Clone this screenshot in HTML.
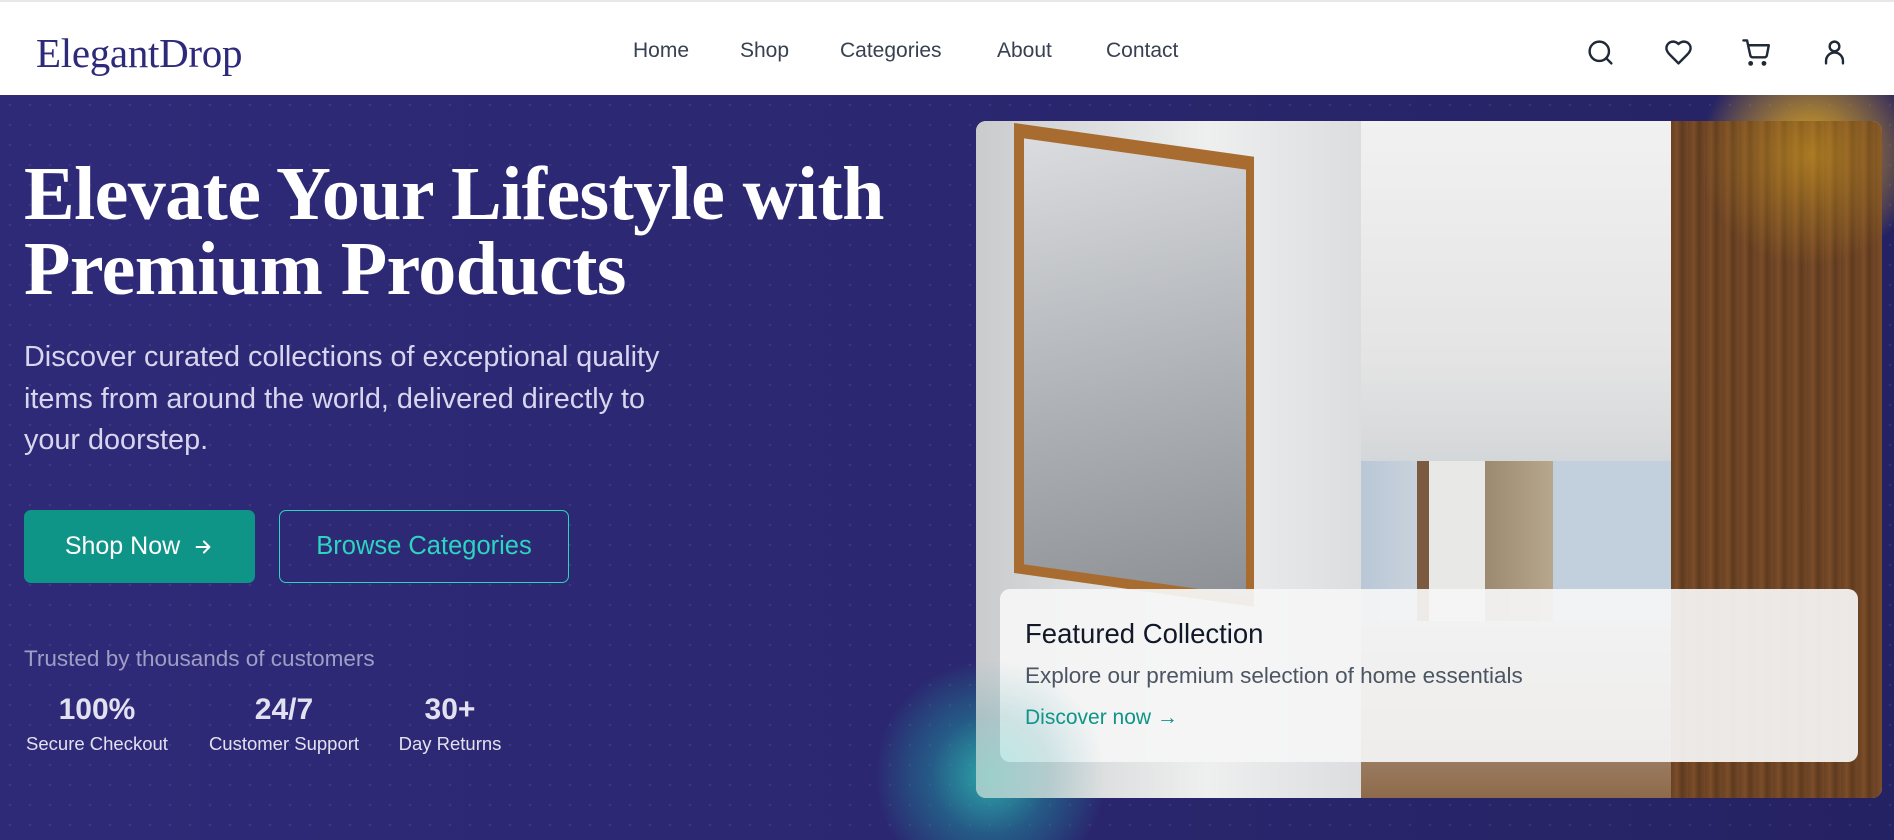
<!DOCTYPE html>
<html><head><meta charset="utf-8"><style>
*{margin:0;padding:0;box-sizing:border-box}
html,body{width:1894px;height:840px;overflow:hidden}
body{font-family:"Liberation Sans",sans-serif;background:#2a2668;position:relative}
.top{position:absolute;left:0;top:0;width:1894px;height:95px;background:#fff;border-top:2px solid #e5e7eb}
.logo{position:absolute;left:36px;top:27px;font-family:"Liberation Serif",serif;font-size:41px;color:#2e2a7a;letter-spacing:-0.3px}
.nav a{position:absolute;top:37px;font-size:21px;color:#374151;text-decoration:none}
.ic{position:absolute;top:36px}
.hero{position:absolute;left:0;top:95px;width:1894px;height:745px;background:linear-gradient(90deg,#2f2a78 0%,#2b2770 50%,#252263 100%);overflow:hidden}
.dots{position:absolute;inset:0;background-image:radial-gradient(rgba(255,255,255,.07) 1.2px,transparent 1.4px);background-size:20px 20px}
h1{position:absolute;left:24px;top:62px;font-family:"Liberation Serif",serif;font-weight:bold;font-size:76px;line-height:75px;color:#fff;letter-spacing:-0.6px;width:950px}
.p{position:absolute;left:24px;top:242px;font-size:28.8px;line-height:41.5px;color:#d8d6ee;width:800px;white-space:nowrap}
.b1{position:absolute;left:24px;top:415px;width:231px;height:73px;background:#0f9488;border-radius:7px;color:#fff;font-size:25px;display:flex;align-items:center;justify-content:center;gap:12px}
.b2{position:absolute;left:279px;top:415px;width:290px;height:73px;border:1.5px solid #2dd4bf;border-radius:7px;color:#2dd4bf;font-size:25.5px;display:flex;align-items:center;justify-content:center}
.tr{position:absolute;left:24px;top:551px;font-size:22.5px;color:#a09dc6}
.st{position:absolute;top:597px;text-align:center;color:#e2e1f0}
.st b{display:block;font-size:30px;line-height:36px}
.st span{display:block;font-size:18.5px;margin-top:5px}
.glow1{position:absolute;left:1700px;top:-60px;width:220px;height:240px;background:radial-gradient(circle,rgba(218,165,32,.9) 0%,rgba(218,165,32,.4) 35%,transparent 68%)}
.glow2{position:absolute;left:870px;top:560px;width:240px;height:240px;background:radial-gradient(circle,rgba(45,212,191,.6) 0%,rgba(30,150,160,.35) 35%,transparent 68%)}
.card{position:absolute;left:976px;top:26px;width:906px;height:677px;border-radius:10px;overflow:hidden;background:#ddd}
.card .wall{position:absolute;left:0;top:0;width:385px;height:677px;background:linear-gradient(90deg,#c9cbcd,#eeefef 60%,#dcdddf)}
.card .room{position:absolute;left:385px;top:0;width:310px;height:677px;background:linear-gradient(180deg,#f1f1f1 0%,#e4e4e4 35%,#cfd3d6 55%,#b8bcc0 75%,#a48a72 90%,#8e6a4b 100%)}
.card .win{position:absolute;left:385px;top:340px;width:310px;height:160px;background:linear-gradient(90deg,#b9c7d6 0,#c8d2dc 18%,#7b5a40 18%,#7b5a40 22%,#e8e8e6 22%,#e8e8e6 40%,#9c8a70 40%,#b7a78c 62%,#c2d0dd 62%)}
.card .wood{position:absolute;left:695px;top:0;width:211px;height:677px;background:repeating-linear-gradient(90deg,#6a4222 0,#7b4d2a 6px,#5e3a1e 11px,#734828 17px)}
.frame{position:absolute;left:38px;top:2px;width:240px;height:450px;background:#a86c30;transform:skewY(8deg);transform-origin:0 0}
.frame div{position:absolute;left:10px;top:14px;right:8px;bottom:10px;background:linear-gradient(160deg,#dadcdf,#aeb1b5 55%,#8d9095)}
.ov{position:absolute;left:24px;top:468px;width:858px;height:173px;border-radius:10px;background:rgba(245,245,245,.93)}
.ov h3{position:absolute;left:25px;top:29px;font-weight:normal;font-size:27.5px;color:#111827}
.ov p{position:absolute;left:25px;top:74px;font-size:22.5px;color:#4b5563}
.ov a{position:absolute;left:25px;top:117px;font-size:21px;color:#0f9488}
</style></head><body>
<div class="top">
<div class="logo">ElegantDrop</div>
<div class="nav"><a style="left:633px">Home</a><a style="left:740px">Shop</a><a style="left:840px">Categories</a><a style="left:997px">About</a><a style="left:1106px">Contact</a></div>
<svg class="ic" style="left:1586px" width="29" height="29" viewBox="0 0 24 24" fill="none" stroke="#1f2937" stroke-width="2" stroke-linecap="round"><circle cx="11" cy="11" r="8"/><path d="M21 21l-4.3-4.3"/></svg>
<svg class="ic" style="left:1664px" width="29" height="29" viewBox="0 0 24 24" fill="none" stroke="#1f2937" stroke-width="2" stroke-linejoin="round"><path d="M19 14c1.5-1.5 3-3.2 3-5.5A5.5 5.5 0 0 0 16.5 3c-1.8 0-3 .5-4.5 2-1.5-1.5-2.7-2-4.5-2A5.5 5.5 0 0 0 2 8.5c0 2.3 1.5 4 3 5.5l7 7z"/></svg>
<svg class="ic" style="left:1741px" width="29" height="29" viewBox="0 0 24 24" fill="none" stroke="#1f2937" stroke-width="2" stroke-linecap="round" stroke-linejoin="round"><circle cx="8" cy="21" r="1"/><circle cx="19" cy="21" r="1"/><path d="M2 2h3l2.7 12.4a2 2 0 0 0 2 1.6h9.7a2 2 0 0 0 2-1.6L23 6H6"/></svg>
<svg class="ic" style="left:1820px" width="29" height="29" viewBox="0 0 24 24" fill="none" stroke="#1f2937" stroke-width="2" stroke-linecap="round"><circle cx="12" cy="7" r="4"/><path d="M5 21v-2a7 7 0 0 1 14 0v2"/></svg>
</div>
<div class="hero">
<div class="dots"></div>
<div class="glow1"></div>
<div class="glow2"></div>
<h1>Elevate Your Lifestyle with Premium Products</h1>
<div class="p">Discover curated collections of exceptional quality<br>items from around the world, delivered directly to<br>your doorstep.</div>
<div class="b1">Shop Now <svg width="22" height="22" viewBox="0 0 24 24" fill="none" stroke="#fff" stroke-width="2.2" stroke-linecap="round" stroke-linejoin="round"><path d="M5 12h14M13 6l6 6-6 6"/></svg></div>
<div class="b2">Browse Categories</div>
<div class="tr">Trusted by thousands of customers</div>
<div class="st" style="left:24px;width:146px"><b>100%</b><span>Secure Checkout</span></div>
<div class="st" style="left:206px;width:156px"><b>24/7</b><span>Customer Support</span></div>
<div class="st" style="left:398px;width:104px"><b>30+</b><span>Day Returns</span></div>
<div class="card">
<div class="wall"></div><div class="room"></div><div class="win"></div><div class="wood"></div>
<div class="frame"><div></div></div>
<div class="ov"><h3>Featured Collection</h3><p>Explore our premium selection of home essentials</p><a>Discover now →</a></div>
</div>
<div class="glow1" style="opacity:.6"></div>
<div class="glow2" style="opacity:.5"></div>
</div>
</body></html>
